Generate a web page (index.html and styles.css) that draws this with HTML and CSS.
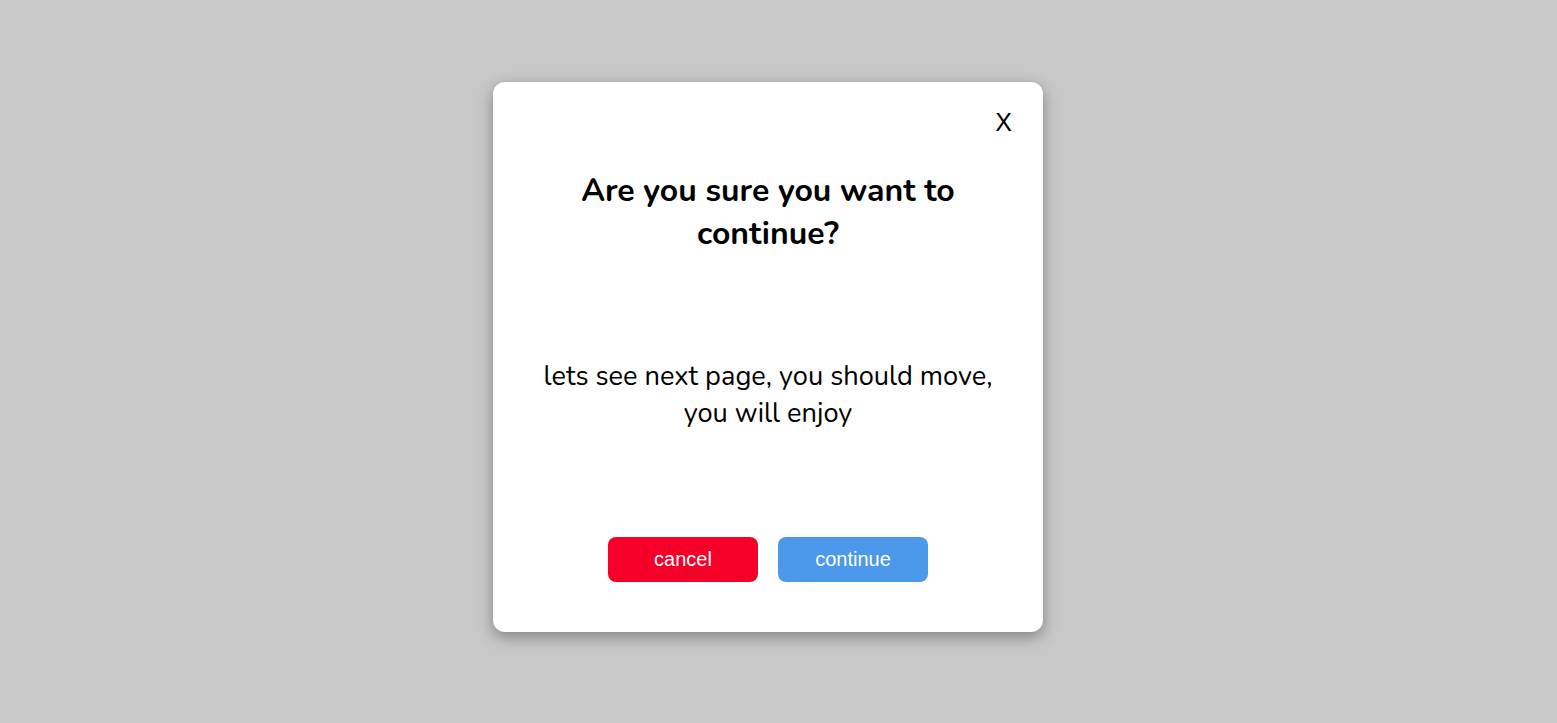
FILE: index.html
```html
<!DOCTYPE html>
<html>
<head>
<meta charset="utf-8">
<link rel="stylesheet" href="styles.css">
</head>
<body>
<div class="background">
  <div class="modal">
    <div class="close-row"><button class="close-btn">X</button></div>
    <div class="title"><h1>Are you sure you want to continue?</h1></div>
    <div class="body"><p>lets see next page, you should move, you will enjoy</p></div>
    <div class="footer">
      <button class="btn cancel">cancel</button>
      <button class="btn continue">continue</button>
    </div>
  </div>
</div>
</body>
</html>
```
FILE: styles.css
```css
html, body {
  margin: 0;
  padding: 0;
}
.background {
  width: 1557px;
  height: 723px;
  box-sizing: border-box;
  padding: 0 21px 9px 0;
  background: #c8c8c8;
  display: flex;
  justify-content: center;
  align-items: center;
}
.modal {
  width: 500px;
  height: 500px;
  padding: 25px;
  border-radius: 12px;
  background: #fff;
  box-shadow: rgba(0, 0, 0, 0.35) 0px 5px 15px;
  display: flex;
  flex-direction: column;
  font-family: "Nunito", "Open Sans", sans-serif;
}
.close-row {
  display: flex;
  justify-content: flex-end;
}
.close-btn {
  background: transparent;
  border: none;
  font-family: "Liberation Sans", Arial, sans-serif;
  font-size: 25px;
  line-height: normal;
  padding: 1px 6px;
  color: #000;
}
.title {
  display: inline-block;
  text-align: center;
  margin-top: 10px;
}
.title h1 {
  font-size: 32px;
  line-height: normal;
  font-weight: 700;
  margin: 21.44px 0;
  color: #000;
}
.body {
  flex: 50%;
  display: flex;
  justify-content: center;
  align-items: center;
  font-size: 27.2px;
  line-height: normal;
  text-align: center;
  color: #000;
}
.body p {
  margin: 27.2px 0;
}
.footer {
  flex: 20%;
  display: flex;
  justify-content: center;
  align-items: center;
}
.btn {
  width: 150px;
  height: 45px;
  margin: 10px;
  border: none;
  border-radius: 8px;
  color: #fff;
  font-family: "Liberation Sans", Arial, sans-serif;
  font-size: 20px;
  padding: 0;
}
.cancel {
  background: #f60029;
}
.continue {
  background: #4c99eb;
}
```
